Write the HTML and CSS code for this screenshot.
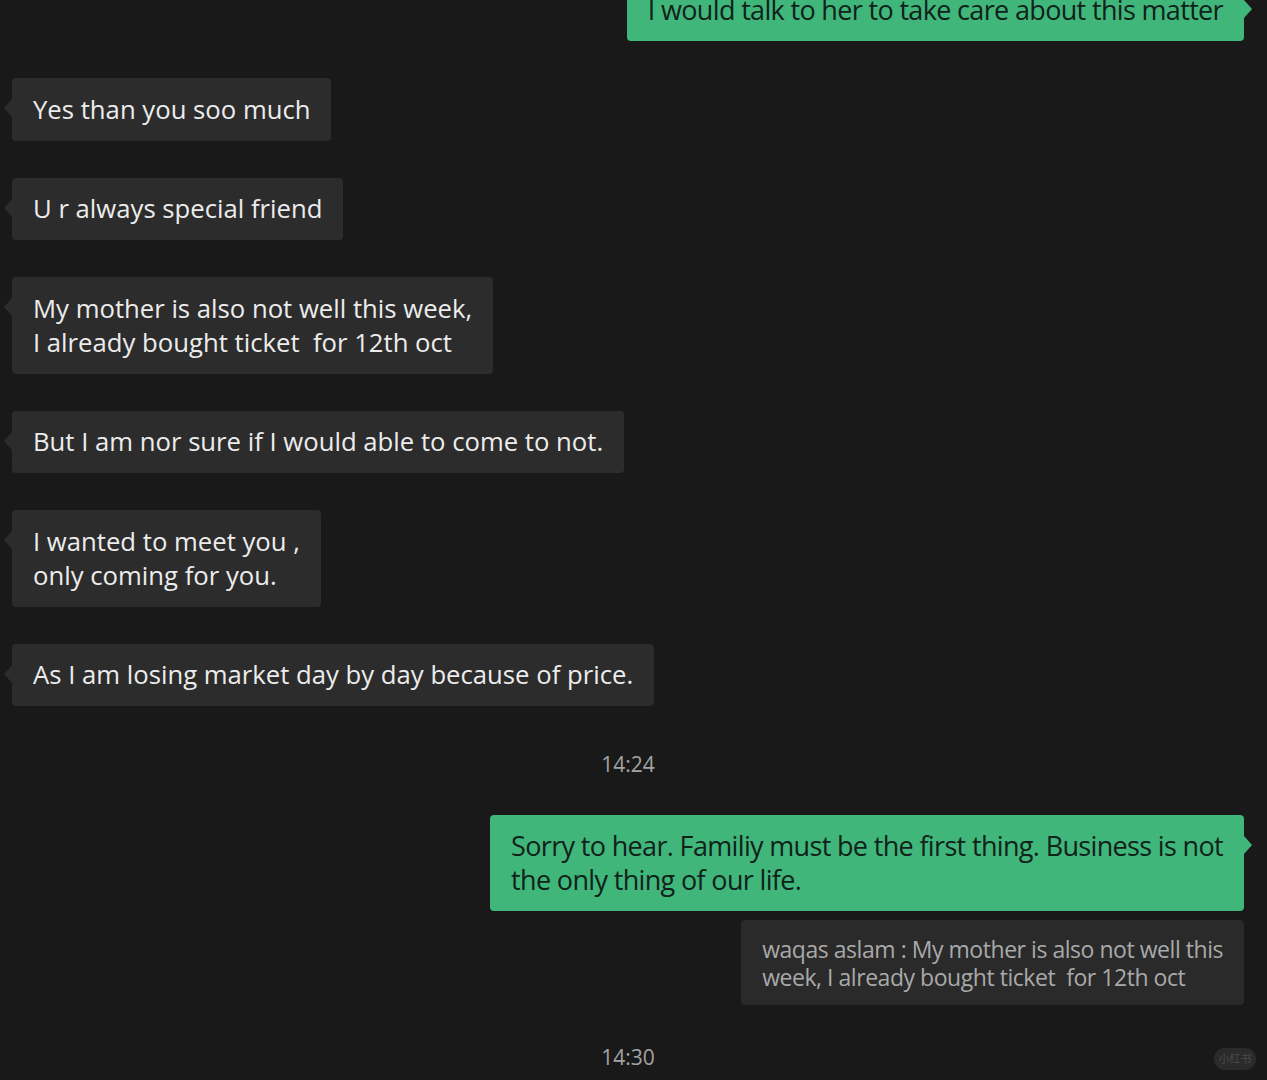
FILE: index.html
```html
<!DOCTYPE html>
<html>
<head>
<meta charset="utf-8">
<link rel="stylesheet" href="styles.css">
</head>
<body>
<div class="chat">
  <div class="row right first">
    <div class="bubble mine">I would talk to her to take care about this matter</div>
  </div>
  <div class="row left">
    <div class="bubble theirs">Yes than you soo much</div>
  </div>
  <div class="row left">
    <div class="bubble theirs">U r always special friend</div>
  </div>
  <div class="row left">
    <div class="bubble theirs">My mother is also not well this week,<br>I already bought ticket&nbsp; for 12th oct</div>
  </div>
  <div class="row left">
    <div class="bubble theirs">But I am nor sure if I would able to come to not.</div>
  </div>
  <div class="row left">
    <div class="bubble theirs">I wanted to meet you ,<br>only coming for you.</div>
  </div>
  <div class="row left">
    <div class="bubble theirs">As I am losing market day by day because of price.</div>
  </div>
  <div class="time t1">14:24</div>
  <div class="row right">
    <div class="bubble mine">Sorry to hear. Familiy must be the first thing. Business is not<br>the only thing of our life.</div>
  </div>
  <div class="row right quote-row">
    <div class="quote">waqas aslam : My mother is also not well this<br>week, I already bought ticket&nbsp; for 12th oct</div>
  </div>
  <div class="time t2">14:30</div>
</div>
<div class="mark">小红书</div>
</body>
</html>
```
FILE: styles.css
```css
html, body {
  margin: 0;
  padding: 0;
  background: #191919;
  height: 1080px;
  overflow: hidden;
}
body {
  font-family: "Open Sans", "Noto Sans", "Noto Sans CJK SC", sans-serif;
  position: relative;
}
.chat {
  display: flex;
  flex-direction: column;
  padding: 0 23px 0 12px;
}
.row {
  display: flex;
  margin-bottom: 37px;
}
.row.left { justify-content: flex-start; }
.row.right { justify-content: flex-end; }
.row.first { margin-top: -21px; }
.bubble {
  position: relative;
  line-height: 34px;
  border-radius: 4px;
  white-space: nowrap;
}
.theirs {
  font-size: 25.7px;
  padding: 14.5px 21px 14px 21px;
  background: #2c2c2c;
  color: #ececec;
}
.theirs::before {
  content: "";
  position: absolute;
  left: -8px;
  top: 21px;
  width: 0;
  height: 0;
  border-top: 9px solid transparent;
  border-bottom: 9px solid transparent;
  border-right: 8px solid #2c2c2c;
}
.mine {
  font-size: 27px;
  letter-spacing: -0.66px;
  padding: 14px 21px;
  background: #40b67a;
  color: #10221a;
}
.mine::after {
  content: "";
  position: absolute;
  right: -8px;
  top: 21px;
  width: 0;
  height: 0;
  border-top: 9px solid transparent;
  border-bottom: 9px solid transparent;
  border-left: 8px solid #40b67a;
}
.time {
  text-align: center;
  color: #a3a3a3;
  font-size: 21px;
  line-height: 30px;
}
.t1 { margin-top: 6px; margin-bottom: 36px; }
.row.quote-row { margin-top: -28px; }
.quote {
  background: #2a2a2a;
  color: #a9a9a9;
  font-size: 23px;
  letter-spacing: -0.46px;
  line-height: 28px;
  padding: 15px 21px 14px 21px;
  border-radius: 4px;
  white-space: nowrap;
}
.t2 { margin-top: 0; }
.mark {
  position: absolute;
  right: 11px;
  top: 1048px;
  width: 42px;
  height: 22px;
  border-radius: 11px;
  background: #2b2b2b;
  color: #4a4a4a;
  font-size: 11px;
  line-height: 22px;
  text-align: center;
}
```
